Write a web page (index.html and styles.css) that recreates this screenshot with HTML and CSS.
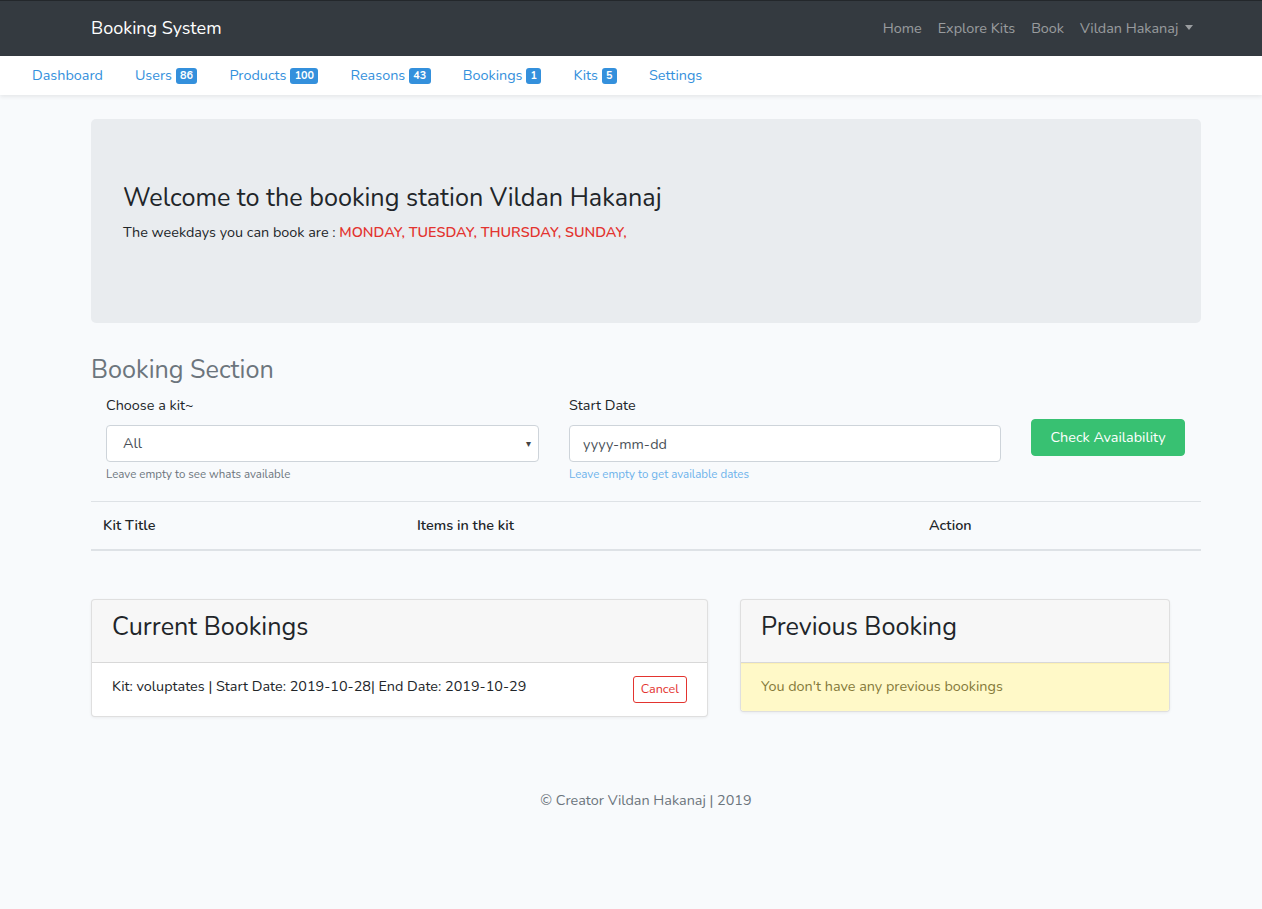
FILE: index.html
```html
<!DOCTYPE html>
<html lang="en">
<head>
<meta charset="utf-8">
<title>Booking System</title>
<link rel="stylesheet" href="styles.css">
</head>
<body>
<nav class="topbar">
  <div class="wrap topbar-inner">
    <a class="brand" href="#">Booking System</a>
    <ul class="topnav">
      <li><a href="#">Home</a></li>
      <li><a href="#">Explore Kits</a></li>
      <li><a href="#">Book</a></li>
      <li><a href="#" class="dropdown">Vildan Hakanaj <span class="caret"></span></a></li>
    </ul>
  </div>
</nav>
<nav class="subnav">
  <ul>
    <li><a href="#">Dashboard</a></li>
    <li><a href="#">Users <span class="badge">86</span></a></li>
    <li><a href="#">Products <span class="badge">100</span></a></li>
    <li><a href="#">Reasons <span class="badge">43</span></a></li>
    <li><a href="#">Bookings <span class="badge">1</span></a></li>
    <li><a href="#">Kits <span class="badge">5</span></a></li>
    <li><a href="#">Settings</a></li>
  </ul>
</nav>

<main class="wrap">
  <section class="jumbotron">
    <h3 class="jumbo-title">Welcome to the booking station Vildan Hakanaj</h3>
    <p class="jumbo-text">The weekdays you can book are : <span class="days">MONDAY, TUESDAY, THURSDAY, SUNDAY,</span></p>
  </section>

  <h3 class="section-title">Booking Section</h3>
  <form class="booking-form">
    <div class="field">
      <label class="label">Choose a kit~</label>
      <div class="select">All<span class="select-arrow">&#9662;</span></div>
      <small class="help muted">Leave empty to see whats available</small>
    </div>
    <div class="field">
      <label class="label">Start Date</label>
      <input class="input" type="text" placeholder="yyyy-mm-dd">
      <small class="help info">Leave empty to get available dates</small>
    </div>
    <div class="field field-btn">
      <button type="button" class="btn-success">Check Availability</button>
    </div>
  </form>

  <table class="kit-table">
    <thead>
      <tr>
        <th class="c1">Kit Title</th>
        <th class="c2">Items in the kit</th>
        <th class="c3">Action</th>
      </tr>
    </thead>
  </table>

  <div class="cards">
    <div class="card card-current">
      <div class="card-header"><h3>Current Bookings</h3></div>
      <div class="booking-item">
        <span>Kit: voluptates | Start Date: 2019-10-28| End Date: 2019-10-29</span>
        <button type="button" class="btn-cancel">Cancel</button>
      </div>
    </div>
    <div class="card card-prev">
      <div class="card-header"><h3>Previous Booking</h3></div>
      <div class="alert-warning">You don't have any previous bookings</div>
    </div>
  </div>

  <footer class="footer">© Creator Vildan Hakanaj | 2019</footer>
</main>
</body>
</html>
```

FILE: styles.css
```css
* { box-sizing: border-box; }
html, body { margin: 0; padding: 0; }
body {
  font-family: "Nunito", "Lato", "Open Sans", sans-serif;
  font-size: 14.4px;
  line-height: 1.6;
  color: #212529;
  background: #f8fafc;
}
a { text-decoration: none; }
ul { list-style: none; margin: 0; padding: 0; }
h3 { margin: 0; font-weight: 400; }

.wrap { width: 1110px; margin-left: 91px; }

/* top bar */
.topbar { background: #343a40; height: 56px; border-top: 1px solid #23272b; }
.topbar-inner { display: flex; align-items: center; justify-content: space-between; height: 55px; }
.brand { color: #fff; font-size: 18px; }
.topnav { display: flex; }
.topnav a { color: rgba(255,255,255,.5); padding: 8px 8px; display: block; }
.caret {
  display: inline-block; width: 0; height: 0; margin-left: 3px; vertical-align: 3px;
  border-top: 5px solid rgba(255,255,255,.5);
  border-left: 4.5px solid transparent; border-right: 4.5px solid transparent;
}

/* sub nav */
.subnav { background: #fff; height: 39px; padding: 0 16px; box-shadow: 0 2px 4px rgba(0,0,0,.075); position: relative; }
.subnav ul { display: flex; }
.subnav a { display: block; padding: 8px 16px; color: #3490dc; }
.badge {
  display: inline-block; background: #3490dc; color: #fff; font-size: 10.8px; font-weight: 700;
  line-height: 1; padding: 3px 4.4px 2.5px; border-radius: 3px; vertical-align: 1px;
}

/* jumbotron */
.jumbotron { margin-top: 24px; background: #e9ecef; border-radius: 5px; padding: 64px 32px; height: 204px; }
.jumbo-title { font-size: 25.2px; line-height: 1.2; margin-bottom: 8px; }
.jumbo-text { margin: 0; }
.days { color: #e3342f; font-weight: 600; }

/* booking section */
.section-title { margin-top: 32px; font-size: 25.2px; line-height: 1.2; color: #6c757d; margin-bottom: 9px; }
.booking-form { display: grid; grid-template-columns: 463px 462px 1fr; }
.field { padding: 0 15px; display: flex; flex-direction: column; }
.field-btn { padding-top: 25px; }
.label { display: block; line-height: 23px; margin-bottom: 8px; }
.select, .input {
  height: 37px; border: 1px solid #ced4da; border-radius: 4px; background: #fff;
  font: inherit; color: #495057; width: 100%;
}
.select { position: relative; padding: 6px 16px; line-height: 23px; }
.select-arrow { position: absolute; right: 7px; top: 7px; font-size: 10px; color: #444; }
.input { padding: 6px 13px; }
.input::placeholder { color: #495057; opacity: 1; }
.help { font-size: 11.52px; line-height: 18.4px; margin-top: 3px; margin-bottom: 17px; }
.muted { color: #6c757d; }
.info { color: #6cb2eb; }
.btn-success {
  width: 154px; height: 37px; background: #38c172; color: #fff; border: 1px solid #38c172;
  border-radius: 4px; font: inherit; padding: 0; cursor: pointer;
}

/* table */
.kit-table { width: 100%; border-collapse: collapse; margin-bottom: 48px; }
.kit-table th {
  text-align: left; font-weight: 600; padding: 12px; line-height: 23px;
  border-top: 1px solid #dee2e6; border-bottom: 2px solid #dee2e6;
}
.c1 { width: 314px; }
.c2 { width: 512px; }

/* cards */
.cards { display: flex; gap: 32px; align-items: flex-start; }
.card {
  background: #fff; border: 1px solid rgba(0,0,0,.125); border-radius: 4px; overflow: hidden;
  box-shadow: 0 1px 3px rgba(0,0,0,.06);
}
.card-current { width: 617px; }
.card-prev { width: 430px; }
.card-header { background: rgba(0,0,0,.03); border-bottom: 1px solid rgba(0,0,0,.125); padding: 12px 20px 20px; }
.card-header h3 { font-size: 25.2px; line-height: 1.2; }
.booking-item { display: flex; justify-content: space-between; align-items: flex-start; padding: 12px 20px 13px; }
.btn-cancel {
  margin-top: 1px; height: 27px; padding: 0 7px; border: 1px solid #e3342f; color: #e3342f; background: #fff;
  border-radius: 3px; font: inherit; font-size: 12.6px;
}
.alert-warning {
  background: #fff9c8; color: #857a3a; padding: 11px 20px 13px; line-height: 23px;
  border-top: 1px solid #fdf2b4;
}

.footer { text-align: center; color: #6c757d; margin-top: 72px; padding-bottom: 98px; }
```
